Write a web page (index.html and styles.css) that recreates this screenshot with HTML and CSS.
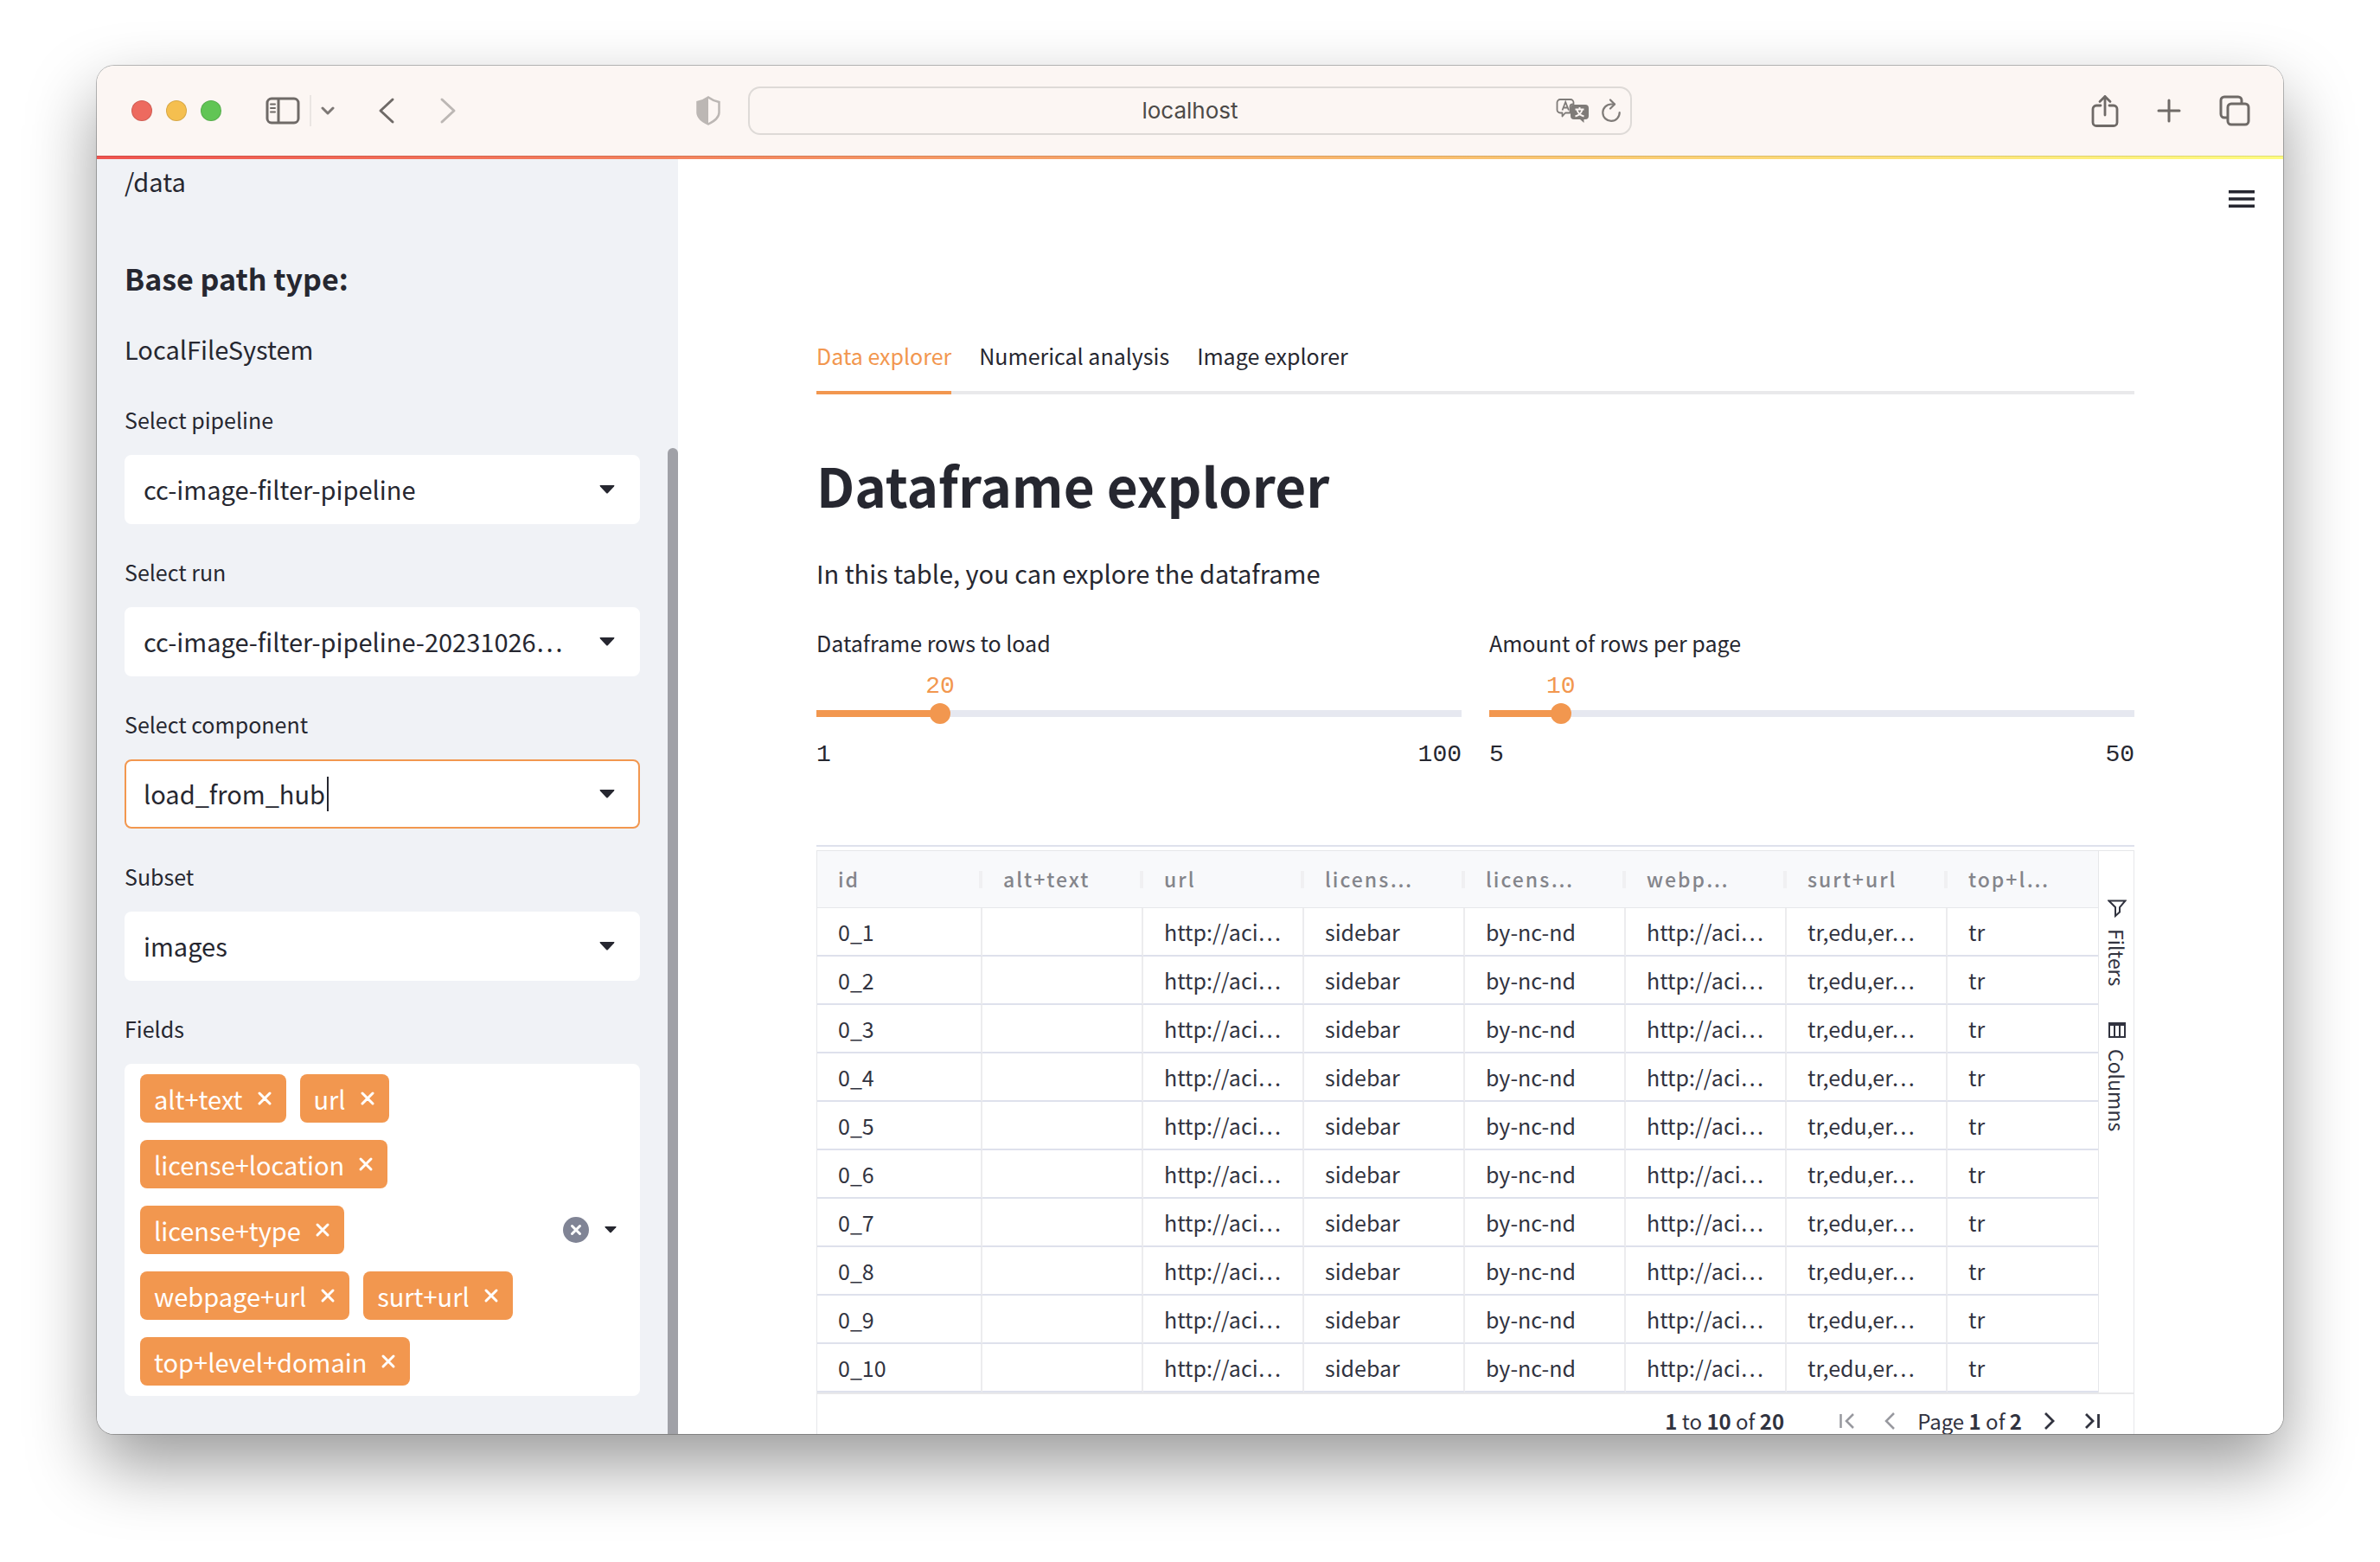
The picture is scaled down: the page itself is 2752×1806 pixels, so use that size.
FILE: index.html
```html
<!DOCTYPE html>
<html lang="en">
<head>
<meta charset="utf-8">
<title>Data explorer</title>
<link rel="stylesheet" href="styles.css">
</head>
<body>
<div class="window">
  <header class="toolbar">
    <div class="toolbar-left">
      <div class="lights"><span class="light red"></span><span class="light amber"></span><span class="light green"></span></div>
      <div class="sidebar-tools">
        <button class="icon-btn" aria-label="Toggle sidebar"><svg width="40" height="32" viewBox="0 0 40 32" fill="none" stroke="#6f6a67" stroke-width="3"><rect x="2" y="2" width="36" height="28" rx="5"/><path d="M15 2v28"/><path d="M6 8.500h5M6 13h5M6 17.500h5" stroke-width="2" stroke-linecap="round"/></svg></button>
        <span class="tool-divider"></span>
        <button class="icon-btn" aria-label="Sidebar options"><svg width="16" height="10" viewBox="0 0 16 10" fill="none" stroke="#7d7875" stroke-width="3" stroke-linecap="round" stroke-linejoin="round"><path d="M2 2l6 6 6-6"/></svg></button>
      </div>
      <div class="history">
        <button class="icon-btn" aria-label="Back"><svg width="20" height="32" viewBox="0 0 20 32" fill="none" stroke="#6f6a67" stroke-width="3" stroke-linecap="round" stroke-linejoin="round"><path d="M17 3L3 16l14 13"/></svg></button>
        <button class="icon-btn" aria-label="Forward"><svg width="20" height="32" viewBox="0 0 20 32" fill="none" stroke="#bcb7b4" stroke-width="3" stroke-linecap="round" stroke-linejoin="round"><path d="M3 3l14 13L3 29"/></svg></button>
      </div>
    </div>
    <div class="toolbar-center">
      <button class="icon-btn" aria-label="Privacy report"><svg width="28" height="34" viewBox="0 0 28 34"><path d="M14 1.500C10 4.500 6 6 1.500 7v12c0 6 5 9.500 12.500 13.500C21.500 28.500 26.500 25 26.500 19V7C22 6 18 4.500 14 1.500z" fill="none" stroke="#bcb7b4" stroke-width="2.500"/><path d="M14 1.500C10 4.500 6 6 1.500 7v12c0 6 5 9.500 12.500 13.500z" fill="#bcb7b4"/></svg></button>
      <div class="address">
        <input class="address-input" type="text" value="localhost" aria-label="Address">
        <div class="address-tools">
          <button class="icon-btn" aria-label="Translate"><svg width="40" height="30" viewBox="0 0 40 30"><path d="M5 2h12a3.500 3.500 0 013.500 3.500V7.500h-1c-2 0-3 1.500-3 3v7H11L7.500 21.500V17.500H5A3.500 3.500 0 011.500 14V5.500A3.500 3.500 0 015 2z" fill="none" stroke="#7f7b78" stroke-width="1.800" stroke-linejoin="round"/><path d="M7.500 14.500l3.700-9.500 3.700 9.500M8.800 11.500h4.800" fill="none" stroke="#7f7b78" stroke-width="1.800"/><path d="M21 8h13a4 4 0 014 4v9a4 4 0 01-4 4h-1.500v4L28 25h-7a4 4 0 01-4-4v-9a4 4 0 014-4z" fill="#7f7b78"/><path d="M22.500 13.500h10M27.500 11v2.500M30.500 14c-1 3.500-4 6.500-8 7.500M24.500 14c1 3.500 4 6.500 8 7.500" fill="none" stroke="#fcf6f3" stroke-width="1.900"/></svg></button>
          <button class="icon-btn" aria-label="Reload"><svg width="24" height="28" viewBox="0 0 24 28" fill="none" stroke="#7f7b78" stroke-width="2.200" stroke-linecap="round" stroke-linejoin="round"><path d="M16 6.500h-4A9.700 9.700 0 1021.700 16"/><path d="M11 1.500l5 5-5 5"/></svg></button>
        </div>
      </div>
    </div>
    <div class="toolbar-right">
      <button class="icon-btn" aria-label="Share"><svg width="32" height="38" viewBox="0 0 32 38" fill="none" stroke="#6f6a67" stroke-width="2.800" stroke-linecap="round" stroke-linejoin="round"><path d="M11 13H6a4 4 0 00-4 4v15.500a4 4 0 004 4h20a4 4 0 004-4V17a4 4 0 00-4-4h-5M16 24V2.500M10 8.500l6-6 6 6"/></svg></button>
      <button class="icon-btn" aria-label="New tab"><svg width="28" height="28" viewBox="0 0 28 28" fill="none" stroke="#6f6a67" stroke-width="3" stroke-linecap="round"><path d="M14 2v24M2 14h24"/></svg></button>
      <button class="icon-btn" aria-label="Tab overview"><svg width="36" height="36" viewBox="0 0 36 36" fill="none" stroke="#6f6a67" stroke-width="3"><rect x="10" y="10" width="24" height="24" rx="4"/><path d="M10 26H6a4 4 0 01-4-4V6a4 4 0 014-4h16a4 4 0 014 4v4"/></svg></button>
    </div>
  </header>
  <div class="rainbow"></div>

  <div class="app">
    <aside class="sidebar">
      <p class="text">/data</p>
      <h3 class="side-heading">Base path type:</h3>
      <p class="text">LocalFileSystem</p>

      <div class="field">
        <label class="label" for="pipeline">Select pipeline</label>
        <div class="control">
          <select class="select" id="pipeline"><option>cc-image-filter-pipeline</option></select>
          <svg class="caret" width="18" height="10" viewBox="0 0 18 10"><path d="M1 0h16q1 0 0 1.500L10 9q-1 1-2 0L1 1.500Q0 0 1 0z" fill="#262730"/></svg>
        </div>
      </div>
      <div class="field">
        <label class="label" for="run">Select run</label>
        <div class="control">
          <select class="select" id="run"><option>cc-image-filter-pipeline-20231026…</option></select>
          <svg class="caret" width="18" height="10" viewBox="0 0 18 10"><path d="M1 0h16q1 0 0 1.500L10 9q-1 1-2 0L1 1.500Q0 0 1 0z" fill="#262730"/></svg>
        </div>
      </div>
      <div class="field">
        <label class="label" for="component">Select component</label>
        <div class="control focused">
          <div class="typed">
            <input class="combo" id="component" type="text" role="combobox" aria-expanded="false" value="load_from_hub">
            <span class="text-cursor"></span>
          </div>
          <svg class="caret" width="18" height="10" viewBox="0 0 18 10"><path d="M1 0h16q1 0 0 1.500L10 9q-1 1-2 0L1 1.500Q0 0 1 0z" fill="#262730"/></svg>
        </div>
      </div>
      <div class="field">
        <label class="label" for="subset">Subset</label>
        <div class="control">
          <select class="select" id="subset"><option>images</option></select>
          <svg class="caret" width="18" height="10" viewBox="0 0 18 10"><path d="M1 0h16q1 0 0 1.500L10 9q-1 1-2 0L1 1.500Q0 0 1 0z" fill="#262730"/></svg>
        </div>
      </div>
      <div class="field" role="group" aria-labelledby="fields-label">
        <span class="label" id="fields-label">Fields</span>
        <div class="multi">
          <div class="chips">
            <span class="chip">alt+text<button class="icon-btn" aria-label="Remove alt+text"><svg class="x" viewBox="0 0 18 18"><path d="M3 3l12 12M15 3L3 15"/></svg></button></span>
            <span class="chip">url<button class="icon-btn" aria-label="Remove url"><svg class="x" viewBox="0 0 18 18"><path d="M3 3l12 12M15 3L3 15"/></svg></button></span>
            <span class="chip">license+location<button class="icon-btn" aria-label="Remove license+location"><svg class="x" viewBox="0 0 18 18"><path d="M3 3l12 12M15 3L3 15"/></svg></button></span>
            <span class="chip">license+type<button class="icon-btn" aria-label="Remove license+type"><svg class="x" viewBox="0 0 18 18"><path d="M3 3l12 12M15 3L3 15"/></svg></button></span>
            <span class="chip">webpage+url<button class="icon-btn" aria-label="Remove webpage+url"><svg class="x" viewBox="0 0 18 18"><path d="M3 3l12 12M15 3L3 15"/></svg></button></span>
            <span class="chip">surt+url<button class="icon-btn" aria-label="Remove surt+url"><svg class="x" viewBox="0 0 18 18"><path d="M3 3l12 12M15 3L3 15"/></svg></button></span>
            <span class="chip">top+level+domain<button class="icon-btn" aria-label="Remove top+level+domain"><svg class="x" viewBox="0 0 18 18"><path d="M3 3l12 12M15 3L3 15"/></svg></button></span>
          </div>
          <div class="multi-tools">
            <button class="icon-btn" aria-label="Clear all"><svg width="30" height="30" viewBox="0 0 30 30"><circle cx="15" cy="15" r="15" fill="#808495"/><path d="M10.500 10.500l9 9M19.500 10.500l-9 9" stroke="#fff" stroke-width="3" stroke-linecap="round"/></svg></button>
            <button class="icon-btn" aria-label="Open fields list"><svg width="14" height="8" viewBox="0 0 18 10"><path d="M1 0h16q1 0 0 1.500L10 9q-1 1-2 0L1 1.500Q0 0 1 0z" fill="#262730"/></svg></button>
          </div>
        </div>
      </div>
      <span class="scroll-thumb"></span>
    </aside>

    <main class="main">
      <div class="app-header">
        <button class="icon-btn" aria-label="Main menu"><svg width="30" height="20" viewBox="0 0 30 20" fill="#262730"><path d="M0 0h30v3.400H0zM0 8.300h30v3.400H0zM0 16.600h30V20H0z"/></svg></button>
      </div>
      <div class="content">
        <div class="tabs" role="tablist">
          <button class="tab active" role="tab" aria-selected="true">Data explorer</button>
          <button class="tab" role="tab" aria-selected="false">Numerical analysis</button>
          <button class="tab" role="tab" aria-selected="false">Image explorer</button>
        </div>
        <h1 class="title">Dataframe explorer</h1>
        <p class="text">In this table, you can explore the dataframe</p>

        <div class="sliders">
          <div class="slider" style="--pos: 19.190%">
            <label class="slider-label" for="rows">Dataframe rows to load</label>
            <div class="value-row"><output class="value" for="rows">20</output></div>
            <div class="track"><input class="range" id="rows" type="range" min="1" max="100" value="20"></div>
            <div class="limits"><span>1</span><span>100</span></div>
          </div>
          <div class="slider" style="--pos: 11.110%">
            <label class="slider-label" for="per-page">Amount of rows per page</label>
            <div class="value-row"><output class="value" for="per-page">10</output></div>
            <div class="track"><input class="range" id="per-page" type="range" min="5" max="50" value="10"></div>
            <div class="limits"><span>5</span><span>50</span></div>
          </div>
        </div>

        <div class="grid-frame">
          <div class="grid">
            <div class="grid-body">
              <table class="data">
                <colgroup><col class="col-id"><col class="col"><col class="col"><col class="col"><col class="col"><col class="col"><col class="col"><col></colgroup>
                <thead><tr><th>id</th><th>alt+text</th><th>url</th><th>licens…</th><th>licens…</th><th>webp…</th><th>surt+url</th><th>top+l…</th></tr></thead>
                <tbody>
                  <tr><td>0_1</td><td></td><td>http://aci…</td><td>sidebar</td><td>by-nc-nd</td><td>http://aci…</td><td>tr,edu,er…</td><td>tr</td></tr>
                  <tr><td>0_2</td><td></td><td>http://aci…</td><td>sidebar</td><td>by-nc-nd</td><td>http://aci…</td><td>tr,edu,er…</td><td>tr</td></tr>
                  <tr><td>0_3</td><td></td><td>http://aci…</td><td>sidebar</td><td>by-nc-nd</td><td>http://aci…</td><td>tr,edu,er…</td><td>tr</td></tr>
                  <tr><td>0_4</td><td></td><td>http://aci…</td><td>sidebar</td><td>by-nc-nd</td><td>http://aci…</td><td>tr,edu,er…</td><td>tr</td></tr>
                  <tr><td>0_5</td><td></td><td>http://aci…</td><td>sidebar</td><td>by-nc-nd</td><td>http://aci…</td><td>tr,edu,er…</td><td>tr</td></tr>
                  <tr><td>0_6</td><td></td><td>http://aci…</td><td>sidebar</td><td>by-nc-nd</td><td>http://aci…</td><td>tr,edu,er…</td><td>tr</td></tr>
                  <tr><td>0_7</td><td></td><td>http://aci…</td><td>sidebar</td><td>by-nc-nd</td><td>http://aci…</td><td>tr,edu,er…</td><td>tr</td></tr>
                  <tr><td>0_8</td><td></td><td>http://aci…</td><td>sidebar</td><td>by-nc-nd</td><td>http://aci…</td><td>tr,edu,er…</td><td>tr</td></tr>
                  <tr><td>0_9</td><td></td><td>http://aci…</td><td>sidebar</td><td>by-nc-nd</td><td>http://aci…</td><td>tr,edu,er…</td><td>tr</td></tr>
                  <tr><td>0_10</td><td></td><td>http://aci…</td><td>sidebar</td><td>by-nc-nd</td><td>http://aci…</td><td>tr,edu,er…</td><td>tr</td></tr>
                </tbody>
              </table>
              <div class="side-buttons">
                <button class="side-btn"><svg width="22" height="21" viewBox="0 0 22 21" fill="none" stroke="#31333f" stroke-width="2"><path d="M1.500 1.500h19L14 9v5.500L9 19V9L1.500 1.500z"/></svg>Filters</button>
                <button class="side-btn"><svg width="20" height="18" viewBox="0 0 20 18" fill="none" stroke="#31333f" stroke-width="2"><path d="M1 1h18v16H1zM1 3h18M7 3v14M13 3v14"/></svg>Columns</button>
              </div>
            </div>
            <div class="pager">
              <span class="summary"><b>1</b> to <b>10</b> of <b>20</b></span>
              <div class="pages">
                <button class="icon-btn" aria-label="First page" disabled><svg width="20" height="20" viewBox="0 0 20 20" fill="none" stroke="#98999f" stroke-width="2.500"><path d="M2.500 2v16M17 2l-8 8 8 8"/></svg></button>
                <button class="icon-btn" aria-label="Previous page" disabled><svg width="14" height="20" viewBox="0 0 14 20" fill="none" stroke="#98999f" stroke-width="2.500"><path d="M12 1l-9 9 9 9"/></svg></button>
                <span class="page-text">Page <b>1</b> of <b>2</b></span>
                <button class="icon-btn" aria-label="Next page"><svg width="14" height="20" viewBox="0 0 14 20" fill="none" stroke="#31333f" stroke-width="2.800"><path d="M2 1l9 9-9 9"/></svg></button>
                <button class="icon-btn" aria-label="Last page"><svg width="20" height="20" viewBox="0 0 20 20" fill="none" stroke="#31333f" stroke-width="2.800"><path d="M17.500 2v16M3 2l8 8-8 8"/></svg></button>
              </div>
            </div>
          </div>
        </div>
      </div>
    </main>
  </div>
</div>
</body>
</html>
```
FILE: styles.css
```css
:root {
  --ink: #262730;
  --accent: #f2974f;
  --side: #f0f2f6;
  --chrome: #fcf6f3;
  --line: #dee1ec;
  --sans: "Noto Sans CJK SC", "Noto Sans", sans-serif;
  --mono: "Liberation Mono", monospace;
}

* { box-sizing: border-box; }

body {
  margin: 0;
  padding: 76px 112px 148px;
  height: 100vh;
  overflow: hidden;
  background: #fff;
  color: var(--ink);
  font-family: var(--sans);
  font-size: 29px;
}

button, input, select { font: inherit; color: inherit; }
p, h1, h3 { margin: 0; }

.icon-btn {
  display: flex;
  padding: 0;
  border: 0;
  background: none;
}

.window {
  display: flex;
  flex-direction: column;
  height: 100%;
  border-radius: 20px;
  overflow: hidden;
  background: #fff;
  box-shadow: 0 0 0 1px rgba(0, 0, 0, .25), 0 36px 80px rgba(0, 0, 0, .4);
}

/* Browser chrome */
.toolbar {
  display: grid;
  grid-template-columns: 1fr auto 1fr;
  align-items: center;
  flex: none;
  height: 104px;
  padding: 0 38px 0 40px;
  background: var(--chrome);
}
.toolbar-left, .toolbar-center, .lights, .sidebar-tools, .history, .address-tools {
  display: flex;
  align-items: center;
}
.lights { gap: 16px; }
.light { width: 24px; height: 24px; border-radius: 50%; border: 1px solid rgba(0, 0, 0, .12); }
.red { background: #ed6a5f; }
.amber { background: #f5bf4f; }
.green { background: #61c555; }
.sidebar-tools { gap: 11px; margin-left: 51px; }
.tool-divider { width: 2px; height: 36px; background: #eae5e2; }
.history { gap: 51px; margin-left: 50px; }
.toolbar-center { gap: 32px; margin-right: 62px; }
.address {
  display: grid;
  align-items: center;
  width: 40vw;
  max-width: 1022px;
  height: 56px;
  border: 2px solid #dedad7;
  border-radius: 14px;
}
.address-input, .address-tools { grid-area: 1 / 1; }
.address-input {
  width: 100%;
  padding: 0;
  border: 0;
  background: none;
  text-align: center;
  font-family: Inter, sans-serif;
  font-size: 26px;
  line-height: 32px;
  color: #4c4a48;
}
.address-tools { justify-self: end; gap: 12px; padding-right: 10px; }
.toolbar-right { display: flex; align-items: center; justify-content: flex-end; gap: 44px; }
.rainbow {
  flex: none;
  height: 4px;
  border-top: 1px solid rgba(0, 0, 0, .12);
  background: linear-gradient(90deg, #f0544f, #f7a468 45%, #fffd80) border-box;
}

/* App */
.app { display: flex; flex: 1; min-height: 0; }
.text { padding-bottom: 2px; line-height: 50px; }

.sidebar {
  position: relative;
  flex: none;
  width: 672px;
  padding: 0 44px 0 32px;
  background: var(--side);
  overflow: hidden;
}
.scroll-thumb {
  position: absolute;
  top: 334px;
  right: 0;
  bottom: 0;
  width: 12px;
  border-radius: 6px 6px 0 0;
  background: #a0a1a7;
}
.side-heading { margin: 62px 0 32px; font-size: 34px; line-height: 48px; font-weight: 700; }
.field { margin-top: 36px; }
.label {
  display: block;
  margin-bottom: 22px;
  font-size: 25px;
  line-height: 38px;
}
.control {
  display: grid;
  align-items: center;
  height: 80px;
  border: 2px solid #fff;
  border-radius: 8px;
  background: #fff;
}
.focused { border-color: var(--accent); }
.select, .caret, .typed { grid-area: 1 / 1; }
.select {
  width: 100%;
  height: 76px;
  padding: 0 60px 2px 20px;
  border: 0;
  background: none;
  appearance: none;
}
.caret { justify-self: end; margin-right: 27px; pointer-events: none; }
.typed { display: flex; align-items: center; padding-left: 20px; }
.combo {
  field-sizing: content;
  height: 50px;
  padding: 0 0 2px;
  border: 0;
  background: none;
  outline: 0;
}
.text-cursor { width: 2px; height: 40px; margin-left: 2px; background: var(--ink); }

.multi {
  display: flex;
  align-items: center;
  padding: 12px 27px 12px 18px;
  border-radius: 8px;
  background: #fff;
}
.chips { display: flex; flex: 1; flex-wrap: wrap; gap: 20px 16px; }
.chip {
  display: flex;
  align-items: center;
  gap: 16px;
  height: 56px;
  padding: 0 16px;
  border-radius: 8px;
  background: var(--accent);
  color: #fff;
  line-height: 50px;
}
.x { width: 18px; height: 18px; fill: none; stroke: #fff; stroke-width: 3; stroke-linecap: round; }
.multi-tools { display: flex; align-items: center; gap: 18px; }

/* Main column */
.main { flex: 1; min-width: 0; overflow: hidden; background: #fff; }
.app-header {
  display: flex;
  justify-content: flex-end;
  align-items: flex-start;
  height: 192px;
  padding: 36px 33px 0 0;
}
.content { padding: 0 172px 0 160px; }
.tabs { display: flex; gap: 32px; box-shadow: inset 0 -4px #e9e9eb; }
.tab {
  padding: 15px 0 21px;
  border: 0;
  border-bottom: 4px solid transparent;
  background: none;
  font-size: 25px;
  line-height: 40px;
}
.tab.active { color: var(--accent); border-color: var(--accent); }
.title { margin: 60px 0 33px; font-size: 62px; line-height: 88px; font-weight: 700; }

.sliders { display: grid; grid-template-columns: 1fr 1fr; gap: 32px; margin-top: 34px; }
.slider { font-family: var(--mono); font-size: 28px; line-height: 32px; }
.slider-label {
  display: block;
  margin-bottom: 15px;
  font-family: var(--sans);
  font-size: 25px;
  line-height: 40px;
}
.value-row { display: flex; padding-left: var(--pos); color: var(--accent); }
.value { width: 34px; margin-left: -17px; }
.track {
  height: 24px;
  margin: 3px 0 20px;
  border-radius: 4px;
  background: linear-gradient(90deg, var(--accent) var(--pos), #e6e8f0 0) center / 100% 8px no-repeat;
}
.range {
  display: block;
  width: calc(100% + 24px);
  height: 24px;
  margin: 0 -12px;
  background: none;
  appearance: none;
}
.range::-webkit-slider-thumb {
  appearance: none;
  width: 24px;
  height: 24px;
  border-radius: 50%;
  background: var(--accent);
}
.limits { display: flex; justify-content: space-between; }

/* Data grid */
.grid-frame { margin-top: 88px; padding-top: 4px; border-top: 2px solid var(--line); }
.grid { border: 1px solid #e6e7ea; color: #31333f; }
.grid-body { display: flex; border-bottom: 2px solid #e8e8ea; }
.data {
  flex: 1;
  min-width: 0;
  width: 100%;
  table-layout: fixed;
  border-collapse: separate;
  border-spacing: 0;
  font-size: 25px;
}
.col-id { width: 191px; }
.col { width: 186px; }
.data th, .data td { padding: 0 0 0 24px; text-align: left; white-space: nowrap; overflow: hidden; }
.data th {
  height: 66px;
  padding-bottom: 2px;
  border-bottom: 1px solid #e6e7ea;
  background: linear-gradient(#f0f0f2, #f0f0f2) right center / 4px 20px no-repeat #f8f9fb;
  font-size: 23px;
  font-weight: 500;
  line-height: 40px;
  color: #84858b;
  letter-spacing: 2px;
}
.data th:last-child { background: #f8f9fb; }
.data td { height: 56px; border-bottom: 2px solid var(--line); border-right: 2px solid #ececee; line-height: 40px; }
.data td:last-child { border-right: 0; }
.side-buttons {
  display: flex;
  flex-direction: column;
  flex: none;
  gap: 42px;
  width: 41px;
  padding: 56px 0 0 2px;
  border-left: 1px solid #e6e7ea;
}
.side-btn {
  display: flex;
  align-items: center;
  gap: 13px;
  width: 38px;
  padding: 0;
  border: 0;
  background: none;
  writing-mode: vertical-rl;
  font-size: 23px;
  line-height: 38px;
}
.pager {
  display: flex;
  align-items: center;
  justify-content: flex-end;
  gap: 63px;
  height: 62px;
  padding-right: 38px;
  font-size: 24px;
  line-height: 28px;
}
.pages { display: flex; align-items: center; }
.page-text { margin: 0 25px; }
.pages .icon-btn + .icon-btn { margin-left: 32px; }
```
